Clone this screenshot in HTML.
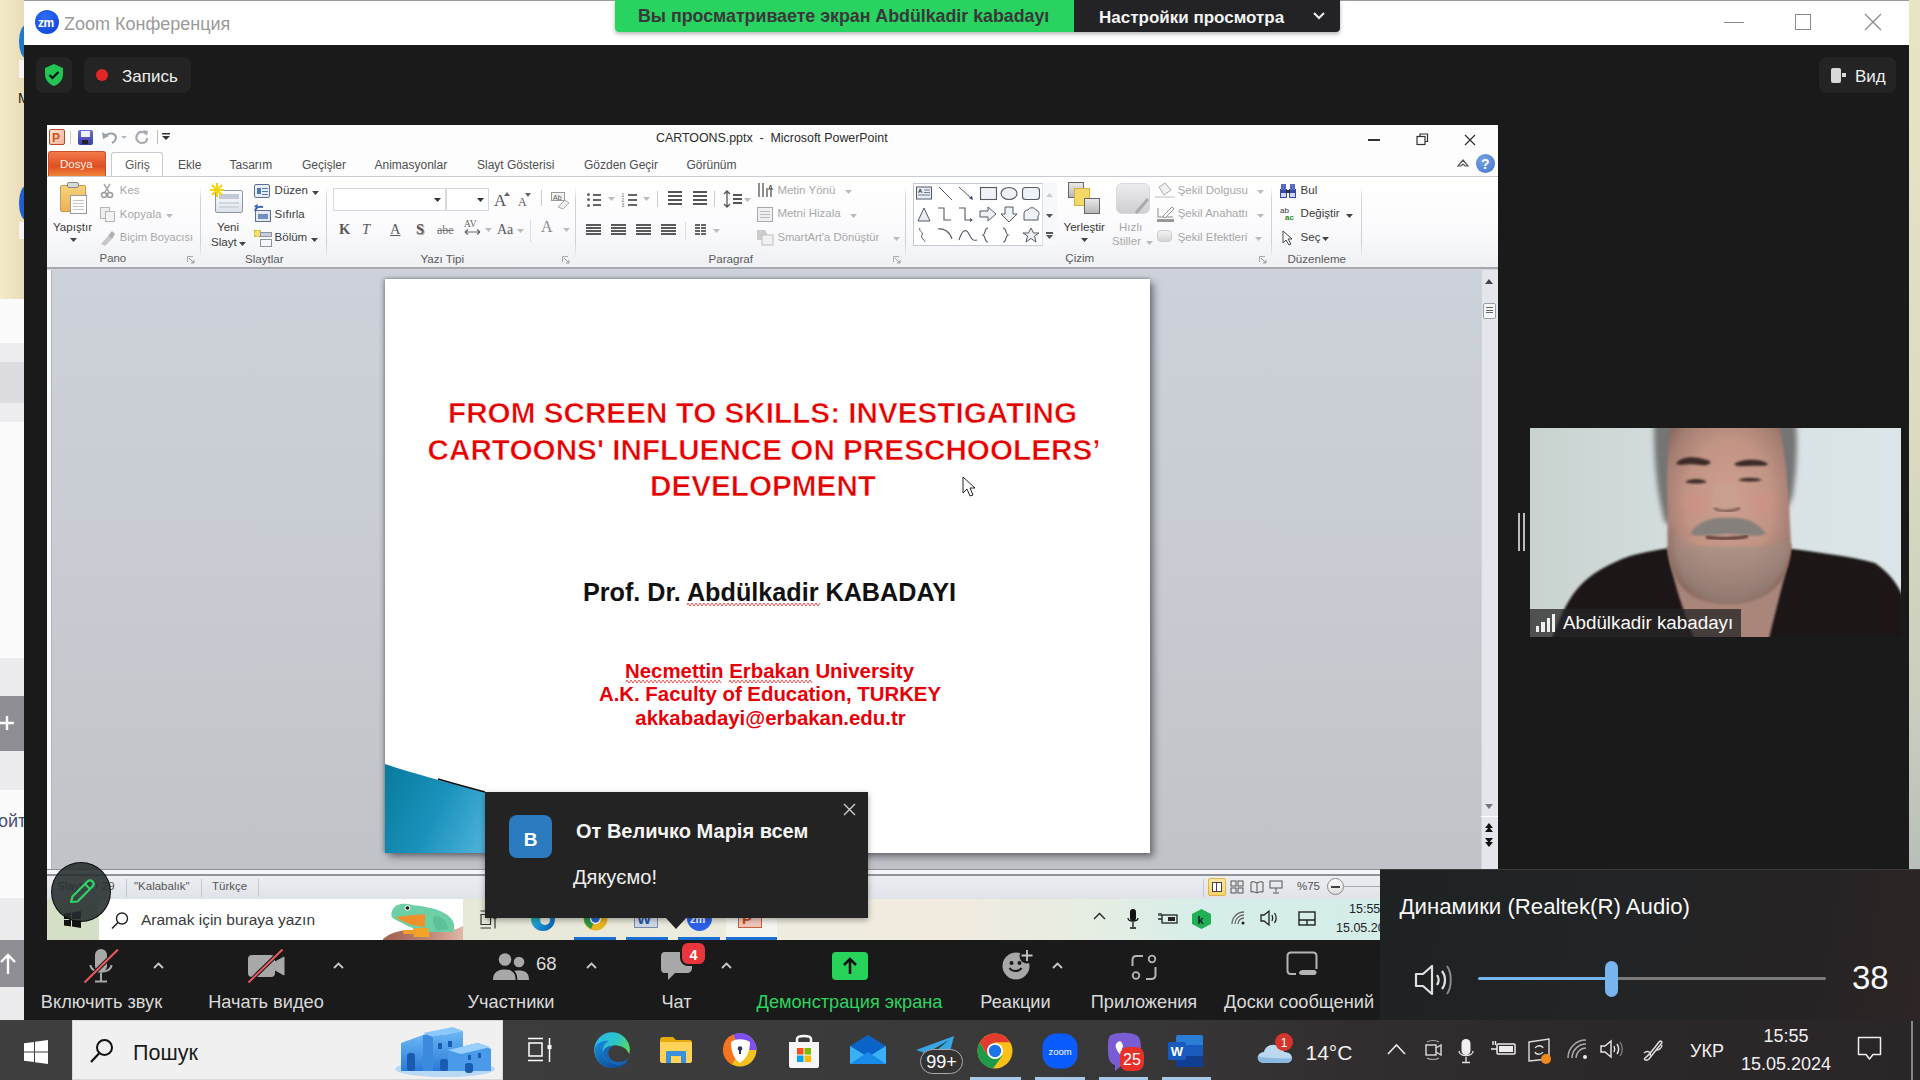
<!DOCTYPE html>
<html><head><meta charset="utf-8">
<style>
*{margin:0;padding:0;box-sizing:border-box}
html,body{width:1920px;height:1080px;overflow:hidden;background:#1a1a1a;font-family:"Liberation Sans",sans-serif}
.a{position:absolute}
.t{position:absolute;white-space:nowrap}
svg{overflow:visible}
</style></head><body>
<div class="a" style="left:0px;top:0px;width:24px;height:300px;background:linear-gradient(90deg,#f4e9c9,#eadcb8)"></div>
<div class="a" style="left:19px;top:25px;width:14px;height:33px;border-radius:50%;background:#1a7ad0"></div>
<div class="a" style="left:19px;top:60px;width:6px;height:18px;background:#f4f4f4"></div>
<div class="a" style="left:19px;top:186px;width:14px;height:34px;border-radius:50%;background:#1a5fd6"></div>
<div class="t" style="left:18px;top:90.60px;font-size:14px;line-height:1;color:#1a1a1a;font-weight:normal;font-family:'Liberation Sans';">M</div>
<div class="a" style="left:19px;top:222px;width:6px;height:17px;background:#f4f4f4"></div>
<div class="a" style="left:0px;top:299px;width:24px;height:721px;background:#fbfbfc"></div>
<div class="a" style="left:0px;top:343px;width:24px;height:19px;background:#ededf0"></div>
<div class="a" style="left:0px;top:362px;width:24px;height:41px;background:#dcdce0"></div>
<div class="a" style="left:0px;top:403px;width:24px;height:19px;background:#ededf0"></div>
<div class="a" style="left:0px;top:658px;width:24px;height:38px;background:#ebebee"></div>
<div class="a" style="left:0px;top:696px;width:24px;height:55px;background:#8e8e94"></div>
<svg class="a" style="left:0px;top:712px;" width="16" height="22" viewBox="0 0 16 22"><path d="M0 11H14M7 4V18" stroke="#fff" stroke-width="2.4"/></svg>
<div class="a" style="left:0px;top:751px;width:24px;height:39px;background:#ebebee"></div>
<div class="t" style="left:-2px;top:811.70px;font-size:18px;line-height:1;color:#4a4f70;font-weight:normal;font-family:'Liberation Sans';">ойт</div>
<div class="a" style="left:0px;top:898px;width:24px;height:42px;background:#ebebee"></div>
<div class="a" style="left:0px;top:940px;width:24px;height:47px;background:#8e8e94"></div>
<svg class="a" style="left:0px;top:952px;" width="18" height="24" viewBox="0 0 18 24"><path d="M8 22V3M1 10L8 3L15 10" stroke="#fff" stroke-width="2.4" fill="none"/></svg>
<div class="a" style="left:0px;top:987px;width:24px;height:33px;background:#ebebee"></div>
<div class="a" style="left:1909px;top:0px;width:11px;height:1020px;background:linear-gradient(180deg,#e9e4c8,#dcdcc0 40%,#c9cdbf 70%,#a9b0b4)"></div>
<div class="a" style="left:24px;top:0px;width:1885px;height:1020px;background:#1a1a1a"></div>
<div class="a" style="left:24px;top:0px;width:1885px;height:45px;background:#fff;border-top:1px solid #9a9a9a"></div>
<div class="a" style="left:35px;top:10px;width:24px;height:24px;border-radius:50%;background:radial-gradient(circle at 40% 30%,#2f6df5,#0b3fd6)"></div>
<div class="t" style="left:38px;top:16.80px;font-size:12px;line-height:1;color:#fff;font-weight:bold;font-family:'Liberation Sans';letter-spacing:-0.5px">zm</div>
<div class="t" style="left:64px;top:15.20px;font-size:18px;line-height:1;color:#9a9a9a;font-weight:normal;font-family:'Liberation Sans';">Zoom Конференция</div>
<div class="a" style="left:1724px;top:22px;width:20px;height:1px;background:#8a8a8a"></div>
<div class="a" style="left:1795px;top:14px;width:16px;height:16px;border:1px solid #8a8a8a"></div>
<svg class="a" style="left:1864px;top:13px;" width="18" height="18" viewBox="0 0 18 18"><path d="M1 1L17 17M17 1L1 17" stroke="#8a8a8a" stroke-width="1.2"/></svg>
<div class="a" style="left:615px;top:0px;width:725px;height:32px;border-radius:0 0 4px 4px;box-shadow:0 2px 4px rgba(0,0,0,.3);overflow:hidden;background:linear-gradient(90deg,#28d35f 0,#28d35f 459px,#232325 459px)"></div>
<div class="t" style="left:638px;top:7.87px;font-size:17.8px;line-height:1;color:#38383b;font-weight:bold;font-family:'Liberation Sans';">Вы просматриваете экран Abdülkadir kabadayı</div>
<div class="t" style="left:1099px;top:8.55px;font-size:17px;line-height:1;color:#f4f4f4;font-weight:bold;font-family:'Liberation Sans';">Настройки просмотра</div>
<svg class="a" style="left:1313px;top:12px;" width="12" height="8" viewBox="0 0 12 8"><path d="M1 1L6 6L11 1" stroke="#eee" stroke-width="2" fill="none"/></svg>
<div class="a" style="left:36px;top:57px;width:36px;height:36px;border-radius:8px;background:#242424"></div>
<svg class="a" style="left:44px;top:64px;" width="20" height="22" viewBox="0 0 20 22"><path d="M10 0L19 4V10C19 16 15 20 10 22C5 20 1 16 1 10V4Z" fill="#23c552"/><path d="M5.5 11L8.5 14L14.5 8" stroke="#111" stroke-width="2.2" fill="none"/></svg>
<div class="a" style="left:84px;top:57px;width:107px;height:36px;border-radius:8px;background:#242424"></div>
<div class="a" style="left:96px;top:69px;width:12px;height:12px;border-radius:50%;background:#e02828"></div>
<div class="t" style="left:122px;top:67.55px;font-size:17px;line-height:1;color:#f0f0f0;font-weight:normal;font-family:'Liberation Sans';">Запись</div>
<div class="a" style="left:1819px;top:57px;width:77px;height:36px;border-radius:8px;background:#242424"></div>
<div class="a" style="left:1831px;top:68px;width:10px;height:15px;border-radius:2px;background:#d8d8d8"></div>
<div class="a" style="left:1842px;top:73px;width:4px;height:4px;background:#d8d8d8"></div>
<div class="t" style="left:1855px;top:67.55px;font-size:17px;line-height:1;color:#f0f0f0;font-weight:normal;font-family:'Liberation Sans';">Вид</div>
<div class="a" style="left:47px;top:125px;width:1451px;height:815px;background:#c9cdd5"></div>
<div class="a" style="left:47px;top:125px;width:1451px;height:51px;background:#fdfdfe"></div>
<div class="a" style="left:49px;top:129px;width:16px;height:16px;border:1px solid #b5482a;border-radius:2px;background:linear-gradient(135deg,#fde6d8,#f5b096)"></div>
<div class="t" style="left:52px;top:131.80px;font-size:12px;line-height:1;color:#d2501c;font-weight:bold;font-family:'Liberation Sans';">P</div>
<div class="a" style="left:70px;top:131px;width:1px;height:13px;background:#c8c8c8"></div>
<div class="a" style="left:78px;top:130px;width:15px;height:15px;border-radius:2px;background:linear-gradient(180deg,#6d70d8,#3a3ea8)"></div>
<div class="a" style="left:81px;top:131px;width:9px;height:6px;background:#eef"></div>
<div class="a" style="left:82px;top:140px;width:6px;height:4px;background:#222"></div>
<svg class="a" style="left:100px;top:129px;" width="30" height="16" viewBox="0 0 30 16"><path d="M5 7C9 3 15 4 16 8C16 11 14 13 12 14" stroke="#9aa0aa" stroke-width="2" fill="none"/><path d="M2 3L3 10L9 7Z" fill="#9aa0aa"/><path d="M21 7L24 10L27 7Z" fill="#b5b8be"/></svg>
<svg class="a" style="left:134px;top:129px;" width="16" height="16" viewBox="0 0 16 16"><path d="M12 5C10 2 5 2 3 6C1 10 4 14 8 14C11 14 13 12 13 9" stroke="#a8acb4" stroke-width="2.2" fill="none"/><path d="M9 1L14 2L13 7Z" fill="#a8acb4"/></svg>
<div class="a" style="left:157px;top:130px;width:1px;height:14px;background:#c0c0c0"></div>
<svg class="a" style="left:161px;top:132px;" width="10" height="10" viewBox="0 0 10 10"><rect x="1" y="1" width="8" height="1.5" fill="#333"/><path d="M1 4H9L5 8Z" fill="#333"/></svg>
<div class="t" style="left:656px;top:132.46px;font-size:12.4px;line-height:1;color:#2b2b2b;font-weight:normal;font-family:'Liberation Sans';">CARTOONS.pptx&nbsp; - &nbsp;Microsoft PowerPoint</div>
<div class="a" style="left:1368px;top:139px;width:12px;height:1.5px;background:#333"></div>
<svg class="a" style="left:1416px;top:133px;" width="13" height="13" viewBox="0 0 13 13"><rect x="1" y="3.5" width="8" height="8" fill="none" stroke="#333" stroke-width="1.2"/><path d="M4 3.5V1H11.5V8.5H9" fill="none" stroke="#333" stroke-width="1.2"/></svg>
<svg class="a" style="left:1464px;top:134px;" width="12" height="12" viewBox="0 0 12 12"><path d="M1 1L11 11M11 1L1 11" stroke="#333" stroke-width="1.3"/></svg>
<div class="a" style="left:48px;top:151px;width:58px;height:25px;border-radius:3px 3px 0 0;background:linear-gradient(180deg,#f27a4a,#e04e24 60%,#f0853a);border:1px solid #c8522e;border-bottom:none"></div>
<div class="t" style="left:60px;top:159.22px;font-size:11.5px;line-height:1;color:#fff3e6;font-weight:normal;font-family:'Liberation Sans';">Dosya</div>
<div class="a" style="left:111px;top:152px;width:52px;height:25px;border-radius:3px 3px 0 0;background:#fff;border:1px solid #c6cad2;border-bottom:none"></div>
<div class="t" style="left:125px;top:158.80px;font-size:12px;line-height:1;color:#5a5a5a;font-weight:normal;font-family:'Liberation Sans';">Giriş</div>
<div class="t" style="left:178px;top:158.80px;font-size:12px;line-height:1;color:#4e4e4e;font-weight:normal;font-family:'Liberation Sans';">Ekle</div>
<div class="t" style="left:229.5px;top:158.80px;font-size:12px;line-height:1;color:#4e4e4e;font-weight:normal;font-family:'Liberation Sans';">Tasarım</div>
<div class="t" style="left:302px;top:158.80px;font-size:12px;line-height:1;color:#4e4e4e;font-weight:normal;font-family:'Liberation Sans';">Geçişler</div>
<div class="t" style="left:374.5px;top:158.80px;font-size:12px;line-height:1;color:#4e4e4e;font-weight:normal;font-family:'Liberation Sans';">Animasyonlar</div>
<div class="t" style="left:477px;top:158.80px;font-size:12px;line-height:1;color:#4e4e4e;font-weight:normal;font-family:'Liberation Sans';">Slayt Gösterisi</div>
<div class="t" style="left:584px;top:158.80px;font-size:12px;line-height:1;color:#4e4e4e;font-weight:normal;font-family:'Liberation Sans';">Gözden Geçir</div>
<div class="t" style="left:686.5px;top:158.80px;font-size:12px;line-height:1;color:#4e4e4e;font-weight:normal;font-family:'Liberation Sans';">Görünüm</div>
<svg class="a" style="left:1457px;top:158px;" width="12" height="10" viewBox="0 0 12 10"><path d="M1 8L6 2L11 8L8 8L6 6L4 8Z" fill="none" stroke="#555" stroke-width="1.2"/></svg>
<div class="a" style="left:1476px;top:154px;width:19px;height:19px;border-radius:50%;background:radial-gradient(circle at 40% 35%,#7aa5e8,#3f6fcc)"></div>
<div class="t" style="left:1481px;top:157.10px;font-size:14px;line-height:1;color:#fff;font-weight:bold;font-family:'Liberation Sans';">?</div>
<div class="a" style="left:47px;top:176px;width:1451px;height:92px;background:linear-gradient(180deg,#ffffff 0,#fbfbfd 55%,#eef0f3 100%);border-top:1px solid #c6cad2"></div>
<div class="a" style="left:47px;top:267px;width:1451px;height:2px;background:#a5a8ae"></div>
<div class="a" style="left:47px;top:269px;width:1451px;height:1px;background:#d3d6dc"></div>
<div class="a" style="left:200px;top:186px;width:1px;height:72px;background:linear-gradient(180deg,rgba(200,204,212,0),#cfd2d8 20%,#cfd2d8 80%,rgba(200,204,212,0))"></div>
<div class="a" style="left:326px;top:186px;width:1px;height:72px;background:linear-gradient(180deg,rgba(200,204,212,0),#cfd2d8 20%,#cfd2d8 80%,rgba(200,204,212,0))"></div>
<div class="a" style="left:575px;top:186px;width:1px;height:72px;background:linear-gradient(180deg,rgba(200,204,212,0),#cfd2d8 20%,#cfd2d8 80%,rgba(200,204,212,0))"></div>
<div class="a" style="left:905px;top:186px;width:1px;height:72px;background:linear-gradient(180deg,rgba(200,204,212,0),#cfd2d8 20%,#cfd2d8 80%,rgba(200,204,212,0))"></div>
<div class="a" style="left:1271px;top:186px;width:1px;height:72px;background:linear-gradient(180deg,rgba(200,204,212,0),#cfd2d8 20%,#cfd2d8 80%,rgba(200,204,212,0))"></div>
<div class="a" style="left:1361px;top:186px;width:1px;height:72px;background:linear-gradient(180deg,rgba(200,204,212,0),#cfd2d8 20%,#cfd2d8 80%,rgba(200,204,212,0))"></div>
<div class="a" style="left:60px;top:185px;width:26px;height:27px;background:linear-gradient(180deg,#f8d27e,#e9b255);border:1px solid #c99a4a;border-radius:2px"></div>
<div class="a" style="left:67px;top:182px;width:12px;height:6px;background:#d9d9d9;border:1px solid #888;border-radius:2px"></div>
<div class="a" style="left:70px;top:195px;width:17px;height:19px;background:#fff;border:1px solid #9a9a9a"></div>
<div class="a" style="left:73px;top:200px;width:11px;height:1px;background:#c8c8c8"></div>
<div class="a" style="left:73px;top:203px;width:11px;height:1px;background:#c8c8c8"></div>
<div class="a" style="left:73px;top:206px;width:11px;height:1px;background:#c8c8c8"></div>
<div class="a" style="left:73px;top:209px;width:11px;height:1px;background:#c8c8c8"></div>
<div class="t" style="left:53px;top:221.14px;font-size:11.6px;line-height:1;color:#3a3a3a;font-weight:normal;font-family:'Liberation Sans';">Yapıştır</div>
<svg class="a" style="left:70px;top:238px;" width="7" height="4" viewBox="0 0 7 4"><path d="M0 0H7L3.5 4Z" fill="#444"/></svg>
<svg class="a" style="left:101px;top:183px;" width="12" height="15" viewBox="0 0 12 15"><circle cx="3" cy="12" r="2.5" fill="none" stroke="#9a9a9a" stroke-width="1.5"/><circle cx="9" cy="12" r="2.5" fill="none" stroke="#9a9a9a" stroke-width="1.5"/><path d="M4 9L9 1M8 9L3 1" stroke="#aaa" stroke-width="1.5"/></svg>
<div class="t" style="left:119.8px;top:185.22px;font-size:11.5px;line-height:1;color:#a8a8a8;font-weight:normal;font-family:'Liberation Sans';">Kes</div>
<div class="a" style="left:100px;top:207px;width:10px;height:12px;background:#eee;border:1px solid #b5b5b5"></div>
<div class="a" style="left:105px;top:211px;width:10px;height:11px;background:#f2f2f2;border:1px solid #b5b5b5"></div>
<div class="t" style="left:119.8px;top:208.53px;font-size:11.5px;line-height:1;color:#a8a8a8;font-weight:normal;font-family:'Liberation Sans';">Kopyala</div>
<svg class="a" style="left:166px;top:214px;" width="7" height="4" viewBox="0 0 7 4"><path d="M0 0H7L3.5 4Z" fill="#bbb"/></svg>
<svg class="a" style="left:99px;top:230px;" width="17" height="16" viewBox="0 0 17 16"><path d="M2 14L9 6L13 9L6 16Z" fill="#c8c8c8"/><path d="M9 6L13 1L16 4L13 9Z" fill="#b0b0b0"/></svg>
<div class="t" style="left:119.8px;top:232.18px;font-size:11.2px;line-height:1;color:#a8a8a8;font-weight:normal;font-family:'Liberation Sans';">Biçim Boyacısı</div>
<div class="t" style="left:99.6px;top:253.31px;font-size:11.4px;line-height:1;color:#5a5a5a;font-weight:normal;font-family:'Liberation Sans';">Pano</div>
<svg class="a" style="left:187px;top:256px;" width="8" height="8" viewBox="0 0 8 8"><path d="M0.5 6V0.5H6" stroke="#aaa" fill="none"/><path d="M2 2L7 7M7 4V7H4" stroke="#999" fill="none"/></svg>
<div class="a" style="left:215px;top:190px;width:28px;height:23px;background:linear-gradient(180deg,#fafbfd,#dfe3ea);border:1px solid #8d96a6;border-radius:2px"></div>
<div class="a" style="left:219px;top:194px;width:20px;height:5px;background:#c3cad6"></div>
<div class="a" style="left:219px;top:202px;width:20px;height:2px;background:#d0d5de"></div>
<div class="a" style="left:219px;top:206px;width:20px;height:2px;background:#d0d5de"></div>
<svg class="a" style="left:210px;top:183px;" width="14" height="14" viewBox="0 0 14 14"><path d="M7 0V14M0 7H14M2 2L12 12M12 2L2 12" stroke="#f5d40a" stroke-width="2"/></svg>
<div class="t" style="left:217px;top:221.14px;font-size:11.6px;line-height:1;color:#3a3a3a;font-weight:normal;font-family:'Liberation Sans';">Yeni</div>
<div class="t" style="left:211px;top:236.14px;font-size:11.6px;line-height:1;color:#3a3a3a;font-weight:normal;font-family:'Liberation Sans';">Slayt</div>
<svg class="a" style="left:239px;top:242px;" width="7" height="4" viewBox="0 0 7 4"><path d="M0 0H7L3.5 4Z" fill="#444"/></svg>
<div class="a" style="left:254px;top:184px;width:16px;height:14px;background:#e9eef6;border:1px solid #5d6f8f;border-radius:2px"></div>
<div class="a" style="left:257px;top:188px;width:4px;height:6px;background:#4f78b8"></div>
<div class="a" style="left:262px;top:188px;width:6px;height:1px;background:#4f78b8"></div>
<div class="a" style="left:262px;top:191px;width:6px;height:1px;background:#4f78b8"></div>
<div class="a" style="left:262px;top:194px;width:6px;height:1px;background:#4f78b8"></div>
<div class="t" style="left:274.6px;top:185.22px;font-size:11.5px;line-height:1;color:#3a3a3a;font-weight:normal;font-family:'Liberation Sans';">Düzen</div>
<svg class="a" style="left:312px;top:191px;" width="7" height="4" viewBox="0 0 7 4"><path d="M0 0H7L3.5 4Z" fill="#444"/></svg>
<div class="a" style="left:255px;top:210px;width:16px;height:12px;background:#e3e9f3;border:1px solid #5d6f8f"></div>
<div class="a" style="left:258px;top:214px;width:10px;height:5px;background:#6f8fc4"></div>
<svg class="a" style="left:254px;top:204px;" width="10" height="8" viewBox="0 0 10 8"><path d="M1 7C2 3 5 2 9 3" stroke="#3c66b4" stroke-width="2" fill="none"/><path d="M0 2L4 0L3 5Z" fill="#3c66b4"/></svg>
<div class="t" style="left:274.6px;top:208.53px;font-size:11.5px;line-height:1;color:#3a3a3a;font-weight:normal;font-family:'Liberation Sans';">Sıfırla</div>
<div class="a" style="left:254px;top:230px;width:7px;height:7px;background:#f0e070;border:1px dashed #c8b030"></div>
<div class="a" style="left:260px;top:232px;width:12px;height:5px;background:#c8cfda;border:1px solid #8a94a4"></div>
<div class="a" style="left:260px;top:239px;width:12px;height:8px;background:#f4f6f9;border:1px solid #8a94a4"></div>
<div class="t" style="left:274.6px;top:231.92px;font-size:11.5px;line-height:1;color:#3a3a3a;font-weight:normal;font-family:'Liberation Sans';">Bölüm</div>
<svg class="a" style="left:311px;top:238px;" width="7" height="4" viewBox="0 0 7 4"><path d="M0 0H7L3.5 4Z" fill="#444"/></svg>
<div class="t" style="left:245px;top:253.14px;font-size:11.6px;line-height:1;color:#5a5a5a;font-weight:normal;font-family:'Liberation Sans';">Slaytlar</div>
<div class="a" style="left:333px;top:188px;width:113px;height:23px;background:#fff;border:1px solid #d5d8de"></div>
<div class="a" style="left:446px;top:188px;width:43px;height:23px;background:#fff;border:1px solid #d5d8de"></div>
<svg class="a" style="left:434px;top:198px;" width="7" height="4" viewBox="0 0 7 4"><path d="M0 0H7L3.5 4Z" fill="#333"/></svg>
<svg class="a" style="left:477px;top:198px;" width="7" height="4" viewBox="0 0 7 4"><path d="M0 0H7L3.5 4Z" fill="#333"/></svg>
<div class="t" style="left:494px;top:191.55px;font-size:17px;line-height:1;color:#555;font-weight:normal;font-family:'Liberation Serif';">A</div>
<svg class="a" style="left:504px;top:192px;" width="6" height="4" viewBox="0 0 6 4"><path d="M0 4L3 0L6 4Z" fill="#666"/></svg>
<div class="t" style="left:518px;top:195.80px;font-size:12px;line-height:1;color:#555;font-weight:normal;font-family:'Liberation Serif';">A</div>
<svg class="a" style="left:525px;top:193px;" width="6" height="4" viewBox="0 0 6 4"><path d="M0 0H6L3 4Z" fill="#666"/></svg>
<div class="a" style="left:541px;top:190px;width:1px;height:16px;background:#ccc"></div>
<div class="a" style="left:551px;top:192px;width:14px;height:9px;background:#f4f4f4;border:1px solid #999"></div>
<div class="t" style="left:553px;top:193.55px;font-size:7px;line-height:1;color:#555;font-weight:normal;font-family:'Liberation Sans';">Ab</div>
<svg class="a" style="left:556px;top:199px;" width="14" height="10" viewBox="0 0 14 10"><path d="M2 8L9 1L13 4L7 10Z" fill="#eee" stroke="#aaa"/></svg>
<div class="t" style="left:339px;top:221.68px;font-size:14.5px;line-height:1;color:#5a5a5a;font-weight:bold;font-family:'Liberation Serif';">K</div>
<div class="t" style="left:362px;top:221.68px;font-size:14.5px;line-height:1;color:#5a5a5a;font-weight:normal;font-family:'Liberation Serif';font-style:italic">T</div>
<div class="t" style="left:390px;top:221.68px;font-size:14.5px;line-height:1;color:#5a5a5a;font-weight:normal;font-family:'Liberation Serif';text-decoration:underline">A</div>
<div class="t" style="left:416px;top:221.68px;font-size:14.5px;line-height:1;color:#5a5a5a;font-weight:bold;font-family:'Liberation Serif';text-shadow:1px 1px 1px #999">S</div>
<div class="t" style="left:437px;top:223.80px;font-size:12px;line-height:1;color:#777;font-weight:normal;font-family:'Liberation Serif';text-decoration:line-through">abe</div>
<div class="t" style="left:464px;top:219.93px;font-size:9.5px;line-height:1;color:#666;font-weight:normal;font-family:'Liberation Serif';">AV</div>
<svg class="a" style="left:464px;top:229px;" width="17" height="6" viewBox="0 0 17 6"><path d="M1 3H16M1 3L4 0.5M1 3L4 5.5M16 3L13 0.5M16 3L13 5.5" stroke="#666" stroke-width="1.2" fill="none"/></svg>
<svg class="a" style="left:485px;top:228px;" width="7" height="4" viewBox="0 0 7 4"><path d="M0 0H7L3.5 4Z" fill="#bbb"/></svg>
<div class="t" style="left:497px;top:223.10px;font-size:14px;line-height:1;color:#5a5a5a;font-weight:normal;font-family:'Liberation Serif';">Aa</div>
<svg class="a" style="left:517px;top:229px;" width="7" height="4" viewBox="0 0 7 4"><path d="M0 0H7L3.5 4Z" fill="#bbb"/></svg>
<div class="a" style="left:530px;top:220px;width:1px;height:22px;background:#ddd"></div>
<div class="t" style="left:541px;top:219.40px;font-size:16px;line-height:1;color:#8a8a8a;font-weight:normal;font-family:'Liberation Serif';">A</div>
<svg class="a" style="left:563px;top:228px;" width="7" height="4" viewBox="0 0 7 4"><path d="M0 0H7L3.5 4Z" fill="#bbb"/></svg>
<div class="t" style="left:420.5px;top:253.14px;font-size:11.6px;line-height:1;color:#5a5a5a;font-weight:normal;font-family:'Liberation Sans';">Yazı Tipi</div>
<svg class="a" style="left:562px;top:256px;" width="8" height="8" viewBox="0 0 8 8"><path d="M0.5 6V0.5H6" stroke="#aaa" fill="none"/><path d="M2 2L7 7M7 4V7H4" stroke="#999" fill="none"/></svg>
<div class="a" style="left:587px;top:193.0px;width:3px;height:3px;border-radius:50%;background:#666"></div>
<div class="a" style="left:593px;top:193.5px;width:8px;height:2px;background:#666"></div>
<div class="t" style="left:621.5px;top:192.75px;font-size:5px;line-height:1;color:#666;font-weight:normal;font-family:'Liberation Sans';">1</div>
<div class="a" style="left:628px;top:193.5px;width:9px;height:2px;background:#666"></div>
<div class="a" style="left:587px;top:198.3px;width:3px;height:3px;border-radius:50%;background:#666"></div>
<div class="a" style="left:593px;top:198.8px;width:8px;height:2px;background:#666"></div>
<div class="t" style="left:621.5px;top:198.05px;font-size:5px;line-height:1;color:#666;font-weight:normal;font-family:'Liberation Sans';">2</div>
<div class="a" style="left:628px;top:198.8px;width:9px;height:2px;background:#666"></div>
<div class="a" style="left:587px;top:203.6px;width:3px;height:3px;border-radius:50%;background:#666"></div>
<div class="a" style="left:593px;top:204.1px;width:8px;height:2px;background:#666"></div>
<div class="t" style="left:621.5px;top:203.35px;font-size:5px;line-height:1;color:#666;font-weight:normal;font-family:'Liberation Sans';">3</div>
<div class="a" style="left:628px;top:204.1px;width:9px;height:2px;background:#666"></div>
<svg class="a" style="left:608px;top:197px;" width="7" height="4" viewBox="0 0 7 4"><path d="M0 0H7L3.5 4Z" fill="#bbb"/></svg>
<svg class="a" style="left:643px;top:197px;" width="7" height="4" viewBox="0 0 7 4"><path d="M0 0H7L3.5 4Z" fill="#bbb"/></svg>
<div class="a" style="left:657px;top:191px;width:1px;height:16px;background:#ccc"></div>
<div class="a" style="left:668px;top:191px;width:14px;height:2px;background:#555"></div>
<div class="a" style="left:668px;top:195px;width:14px;height:2px;background:#555"></div>
<div class="a" style="left:668px;top:199px;width:14px;height:2px;background:#555"></div>
<div class="a" style="left:668px;top:203px;width:14px;height:2px;background:#555"></div>
<div class="a" style="left:693px;top:191px;width:14px;height:2px;background:#555"></div>
<div class="a" style="left:693px;top:195px;width:14px;height:2px;background:#555"></div>
<div class="a" style="left:693px;top:199px;width:14px;height:2px;background:#555"></div>
<div class="a" style="left:693px;top:203px;width:14px;height:2px;background:#555"></div>
<div class="a" style="left:714px;top:191px;width:1px;height:16px;background:#ccc"></div>
<svg class="a" style="left:723px;top:190px;" width="8" height="18" viewBox="0 0 8 18"><path d="M4 1V17M1 4L4 1L7 4M1 14L4 17L7 14" stroke="#555" stroke-width="1.3" fill="none"/></svg>
<div class="a" style="left:733px;top:194px;width:9px;height:2px;background:#555"></div>
<div class="a" style="left:733px;top:198px;width:9px;height:2px;background:#555"></div>
<div class="a" style="left:733px;top:202px;width:9px;height:2px;background:#555"></div>
<svg class="a" style="left:744px;top:198px;" width="7" height="4" viewBox="0 0 7 4"><path d="M0 0H7L3.5 4Z" fill="#bbb"/></svg>
<div class="a" style="left:586px;top:224px;width:15px;height:2px;background:#5a5a5a"></div>
<div class="a" style="left:586px;top:227px;width:15px;height:2px;background:#5a5a5a"></div>
<div class="a" style="left:586px;top:230px;width:15px;height:2px;background:#5a5a5a"></div>
<div class="a" style="left:586px;top:233px;width:15px;height:2px;background:#5a5a5a"></div>
<div class="a" style="left:611px;top:224px;width:15px;height:2px;background:#5a5a5a"></div>
<div class="a" style="left:611px;top:227px;width:15px;height:2px;background:#5a5a5a"></div>
<div class="a" style="left:611px;top:230px;width:15px;height:2px;background:#5a5a5a"></div>
<div class="a" style="left:611px;top:233px;width:15px;height:2px;background:#5a5a5a"></div>
<div class="a" style="left:636px;top:224px;width:15px;height:2px;background:#5a5a5a"></div>
<div class="a" style="left:636px;top:227px;width:15px;height:2px;background:#5a5a5a"></div>
<div class="a" style="left:636px;top:230px;width:15px;height:2px;background:#5a5a5a"></div>
<div class="a" style="left:636px;top:233px;width:15px;height:2px;background:#5a5a5a"></div>
<div class="a" style="left:661px;top:224px;width:15px;height:2px;background:#5a5a5a"></div>
<div class="a" style="left:661px;top:227px;width:15px;height:2px;background:#5a5a5a"></div>
<div class="a" style="left:661px;top:230px;width:15px;height:2px;background:#5a5a5a"></div>
<div class="a" style="left:661px;top:233px;width:15px;height:2px;background:#5a5a5a"></div>
<div class="a" style="left:685px;top:222px;width:1px;height:18px;background:#ddd"></div>
<div class="a" style="left:695px;top:224px;width:5px;height:2px;background:#666"></div>
<div class="a" style="left:695px;top:227px;width:5px;height:2px;background:#666"></div>
<div class="a" style="left:695px;top:230px;width:5px;height:2px;background:#666"></div>
<div class="a" style="left:695px;top:233px;width:5px;height:2px;background:#666"></div>
<div class="a" style="left:701px;top:224px;width:5px;height:2px;background:#666"></div>
<div class="a" style="left:701px;top:227px;width:5px;height:2px;background:#666"></div>
<div class="a" style="left:701px;top:230px;width:5px;height:2px;background:#666"></div>
<div class="a" style="left:701px;top:233px;width:5px;height:2px;background:#666"></div>
<svg class="a" style="left:713px;top:229px;" width="7" height="4" viewBox="0 0 7 4"><path d="M0 0H7L3.5 4Z" fill="#bbb"/></svg>
<svg class="a" style="left:757px;top:182px;" width="16" height="16" viewBox="0 0 16 16"><path d="M2 1V15M6 1V15M10 6V15M14 6V15" stroke="#555" stroke-width="1.3"/></svg>
<div class="t" style="left:768px;top:184.05px;font-size:7px;line-height:1;color:#555;font-weight:bold;font-family:'Liberation Sans';">A</div>
<div class="t" style="left:777.4px;top:184.53px;font-size:11.5px;line-height:1;color:#a8a8a8;font-weight:normal;font-family:'Liberation Sans';">Metin Yönü</div>
<svg class="a" style="left:845px;top:190px;" width="7" height="4" viewBox="0 0 7 4"><path d="M0 0H7L3.5 4Z" fill="#bbb"/></svg>
<div class="a" style="left:757px;top:207px;width:16px;height:15px;background:#eef0f3;border:1px solid #aaa"></div>
<div class="a" style="left:760px;top:211px;width:10px;height:1px;background:#bbb"></div>
<div class="a" style="left:760px;top:214px;width:10px;height:1px;background:#bbb"></div>
<div class="a" style="left:760px;top:217px;width:10px;height:1px;background:#bbb"></div>
<div class="t" style="left:777.4px;top:208.22px;font-size:11.5px;line-height:1;color:#a8a8a8;font-weight:normal;font-family:'Liberation Sans';">Metni Hizala</div>
<svg class="a" style="left:850px;top:214px;" width="7" height="4" viewBox="0 0 7 4"><path d="M0 0H7L3.5 4Z" fill="#bbb"/></svg>
<svg class="a" style="left:756px;top:229px;" width="18" height="17" viewBox="0 0 18 17"><path d="M1 1H9L12 7L9 11H1Z" fill="#ccc"/><rect x="6" y="6" width="11" height="10" fill="#f2f2f2" stroke="#bbb"/></svg>
<div class="t" style="left:777.4px;top:232.00px;font-size:11.3px;line-height:1;color:#a8a8a8;font-weight:normal;font-family:'Liberation Sans';">SmartArt&#39;a Dönüştür</div>
<svg class="a" style="left:893px;top:237px;" width="7" height="4" viewBox="0 0 7 4"><path d="M0 0H7L3.5 4Z" fill="#bbb"/></svg>
<div class="t" style="left:708.5px;top:253.14px;font-size:11.6px;line-height:1;color:#5a5a5a;font-weight:normal;font-family:'Liberation Sans';">Paragraf</div>
<svg class="a" style="left:893px;top:256px;" width="8" height="8" viewBox="0 0 8 8"><path d="M0.5 6V0.5H6" stroke="#aaa" fill="none"/><path d="M2 2L7 7M7 4V7H4" stroke="#999" fill="none"/></svg>
<div class="a" style="left:913px;top:183px;width:144px;height:63px;background:#fff;border:1px solid #c5c9d0"></div>
<div class="a" style="left:1042px;top:183px;width:15px;height:63px;background:#f7f8fa;border-left:1px solid #dde0e5"></div>
<svg class="a" style="left:1046px;top:193px;" width="7" height="4" viewBox="0 0 7 4"><path d="M0 4L3.5 0L7 4Z" fill="#ccc"/></svg>
<svg class="a" style="left:1046px;top:214px;" width="7" height="4" viewBox="0 0 7 4"><path d="M0 0H7L3.5 4Z" fill="#555"/></svg>
<div class="a" style="left:1046px;top:232px;width:7px;height:1.5px;background:#555"></div>
<svg class="a" style="left:1046px;top:235px;" width="7" height="4" viewBox="0 0 7 4"><path d="M0 0H7L3.5 4Z" fill="#555"/></svg>
<svg class="a" style="left:916px;top:186px;" width="128" height="58" viewBox="0 0 128 58">
<rect x="0.5" y="1" width="15" height="12" fill="#e8eef8" stroke="#555a66"/><text x="2" y="7" font-size="6" font-weight="bold" fill="#222" font-family="Liberation Sans">A</text><path d="M8 4H14M8 6.5H14M2 9H14" stroke="#555a66" stroke-width="0.8"/>
<path d="M23 1L36 14" stroke="#555a66"/><path d="M43 1L56 13" stroke="#555a66"/><path d="M53 12L57 14L56 10Z" fill="#2a3a7a"/>
<rect x="64.5" y="1.5" width="16" height="12" fill="#eef1f6" stroke="#555a66" stroke-width="1.1"/>
<ellipse cx="93" cy="7.5" rx="8" ry="6" fill="#eef1f6" stroke="#555a66" stroke-width="1.1"/>
<rect x="106.5" y="1.5" width="17" height="12" rx="3" fill="#eef1f6" stroke="#555a66" stroke-width="1.1"/>
<path d="M8 22L14 35H2Z" fill="#e8ecf3" stroke="#555a66"/>
<path d="M22 22H28V34H35" stroke="#555a66" fill="none" stroke-width="1.1"/>
<path d="M43 22H49V34H56" stroke="#555a66" fill="none" stroke-width="1.1"/><path d="M54 32L57 34L54 36Z" fill="#555a66"/>
<path d="M64 25H72V21L80 28L72 35V31H64Z" fill="#eef1f6" stroke="#555a66"/>
<path d="M89 21H97V28H101L93 36L85 28H89Z" fill="#eef1f6" stroke="#555a66"/>
<path d="M108 34V28C108 25 110 24 112 24C113 21 119 21 120 24C123 25 124 28 122 30V34Z" fill="#eef1f6" stroke="#555a66"/>
<path d="M4 42C2 45 8 46 6 49C4 52 9 54 9 56" stroke="#555a66" fill="none"/>
<path d="M22 43C28 42 34 46 36 53" stroke="#555a66" fill="none" stroke-width="1.1"/>
<path d="M43 54C46 44 50 42 53 48C56 54 57 55 61 54" stroke="#555a66" fill="none" stroke-width="1.1"/>
<path d="M72 42C68 42 70 48 67 49C70 50 68 56 72 56" stroke="#555a66" fill="none" stroke-width="1.1"/>
<path d="M87 42C91 42 89 48 92 49C89 50 91 56 87 56" stroke="#555a66" fill="none" stroke-width="1.1"/>
<path d="M115 42L117.5 47H123L118.5 50L120 56L115 52.5L110 56L111.5 50L107 47H112.5Z" fill="#eef1f6" stroke="#555a66"/>
</svg>
<div class="a" style="left:1068px;top:182px;width:16px;height:16px;background:linear-gradient(180deg,#e8e8e8,#b8b8b8);border:1px solid #666"></div>
<div class="a" style="left:1074px;top:188px;width:16px;height:18px;background:#f5d86a;border:1px solid #d4b040"></div>
<div class="a" style="left:1084px;top:198px;width:16px;height:16px;background:linear-gradient(180deg,#e8e8e8,#b8b8b8);border:1px solid #666"></div>
<div class="t" style="left:1063.5px;top:220.64px;font-size:11.6px;line-height:1;color:#3a3a3a;font-weight:normal;font-family:'Liberation Sans';">Yerleştir</div>
<svg class="a" style="left:1081px;top:238px;" width="7" height="4" viewBox="0 0 7 4"><path d="M0 0H7L3.5 4Z" fill="#444"/></svg>
<div class="a" style="left:1116px;top:183px;width:34px;height:31px;border-radius:6px;background:linear-gradient(180deg,#ececee,#cfcfd3);border:1px solid #d8d8dc"></div>
<svg class="a" style="left:1134px;top:196px;" width="16" height="18" viewBox="0 0 16 18"><path d="M2 17L14 3" stroke="#aaa" stroke-width="3"/></svg>
<div class="t" style="left:1119px;top:220.64px;font-size:11.6px;line-height:1;color:#a8a8a8;font-weight:normal;font-family:'Liberation Sans';">Hızlı</div>
<div class="t" style="left:1112px;top:235.14px;font-size:11.6px;line-height:1;color:#a8a8a8;font-weight:normal;font-family:'Liberation Sans';">Stiller</div>
<svg class="a" style="left:1146px;top:241px;" width="7" height="4" viewBox="0 0 7 4"><path d="M0 0H7L3.5 4Z" fill="#bbb"/></svg>
<div class="t" style="left:1065.3px;top:252.44px;font-size:11.6px;line-height:1;color:#5a5a5a;font-weight:normal;font-family:'Liberation Sans';">Çizim</div>
<svg class="a" style="left:1259px;top:256px;" width="8" height="8" viewBox="0 0 8 8"><path d="M0.5 6V0.5H6" stroke="#aaa" fill="none"/><path d="M2 2L7 7M7 4V7H4" stroke="#999" fill="none"/></svg>
<svg class="a" style="left:1155px;top:182px;" width="20" height="17" viewBox="0 0 20 17"><path d="M4 5L10 1L16 8L9 13Z" fill="#f0f0f0" stroke="#aaa"/><path d="M0 15H20" stroke="#ddd" stroke-width="2"/></svg>
<div class="t" style="left:1177.7px;top:184.82px;font-size:11.5px;line-height:1;color:#a8a8a8;font-weight:normal;font-family:'Liberation Sans';">Şekil Dolgusu</div>
<svg class="a" style="left:1257px;top:190px;" width="7" height="4" viewBox="0 0 7 4"><path d="M0 0H7L3.5 4Z" fill="#bbb"/></svg>
<svg class="a" style="left:1157px;top:206px;" width="18" height="17" viewBox="0 0 18 17"><path d="M1 2V11H16" stroke="#888" fill="none"/><path d="M6 10L15 1L17 3L8 12Z" fill="#fff" stroke="#999"/><rect x="0" y="13" width="17" height="3" fill="#999"/></svg>
<div class="t" style="left:1177.7px;top:208.42px;font-size:11.5px;line-height:1;color:#a8a8a8;font-weight:normal;font-family:'Liberation Sans';">Şekil Anahattı</div>
<svg class="a" style="left:1257px;top:214px;" width="7" height="4" viewBox="0 0 7 4"><path d="M0 0H7L3.5 4Z" fill="#bbb"/></svg>
<div class="a" style="left:1157px;top:230px;width:15px;height:12px;border-radius:4px;background:linear-gradient(180deg,#f5f5f5,#d5d5d5);border:1px solid #ccc"></div>
<div class="t" style="left:1177.7px;top:231.82px;font-size:11.5px;line-height:1;color:#a8a8a8;font-weight:normal;font-family:'Liberation Sans';">Şekil Efektleri</div>
<svg class="a" style="left:1255px;top:237px;" width="7" height="4" viewBox="0 0 7 4"><path d="M0 0H7L3.5 4Z" fill="#bbb"/></svg>
<svg class="a" style="left:1280px;top:184px;" width="17" height="14" viewBox="0 0 17 14"><rect x="0" y="5" width="7" height="9" fill="#3a4aa8"/><rect x="9" y="5" width="7" height="9" fill="#3a4aa8"/><rect x="1" y="0" width="5" height="6" fill="#5a6ac8"/><rect x="10" y="0" width="5" height="6" fill="#5a6ac8"/><rect x="6" y="6" width="4" height="3" fill="#333"/><rect x="1" y="9" width="5" height="4" fill="#cfd6f0"/><rect x="10" y="9" width="5" height="4" fill="#cfd6f0"/></svg>
<div class="t" style="left:1300.6px;top:184.82px;font-size:11.5px;line-height:1;color:#3a3a3a;font-weight:normal;font-family:'Liberation Sans';">Bul</div>
<div class="t" style="left:1280px;top:207.20px;font-size:8px;line-height:1;color:#333;font-weight:normal;font-family:'Liberation Sans';">ab</div>
<div class="t" style="left:1285px;top:214.20px;font-size:8px;line-height:1;color:#2a8a2a;font-weight:bold;font-family:'Liberation Sans';">ac</div>
<div class="t" style="left:1300.6px;top:208.42px;font-size:11.5px;line-height:1;color:#3a3a3a;font-weight:normal;font-family:'Liberation Sans';">Değiştir</div>
<svg class="a" style="left:1346px;top:214px;" width="7" height="4" viewBox="0 0 7 4"><path d="M0 0H7L3.5 4Z" fill="#444"/></svg>
<svg class="a" style="left:1282px;top:230px;" width="11" height="16" viewBox="0 0 11 16"><path d="M1 1V13L4 10L7 15L9 14L6 9H10Z" fill="#fff" stroke="#444"/></svg>
<div class="t" style="left:1300.6px;top:231.92px;font-size:11.5px;line-height:1;color:#3a3a3a;font-weight:normal;font-family:'Liberation Sans';">Seç</div>
<svg class="a" style="left:1322px;top:237px;" width="7" height="4" viewBox="0 0 7 4"><path d="M0 0H7L3.5 4Z" fill="#444"/></svg>
<div class="t" style="left:1287.4px;top:252.74px;font-size:11.6px;line-height:1;color:#5a5a5a;font-weight:normal;font-family:'Liberation Sans';">Düzenleme</div>
<div class="a" style="left:47px;top:270px;width:1434px;height:599px;background:linear-gradient(180deg,#cdd1d9 0,#c9ccd3 45%,#c2c3c8 100%)"></div>
<div class="a" style="left:47px;top:270px;width:5px;height:599px;background:#fafafc;border-right:1px solid #b0b3ba"></div>
<div class="a" style="left:1481px;top:270px;width:17px;height:599px;background:#e4e6ec;border-left:1px solid #d0d3da"></div>
<svg class="a" style="left:1484px;top:277px;" width="10" height="8" viewBox="0 0 10 8"><path d="M1 7L5 2L9 7Z" fill="#444"/></svg>
<div class="a" style="left:1483px;top:303px;width:13px;height:16px;border:1px solid #9aa0aa;border-radius:2px;background:#f6f7f9"></div>
<div class="a" style="left:1486px;top:307.0px;width:7px;height:1px;background:#666"></div>
<div class="a" style="left:1486px;top:309.5px;width:7px;height:1px;background:#666"></div>
<div class="a" style="left:1486px;top:312.0px;width:7px;height:1px;background:#666"></div>
<svg class="a" style="left:1484px;top:802px;" width="10" height="8" viewBox="0 0 10 8"><path d="M1 2L5 7L9 2Z" fill="#777"/></svg>
<div class="a" style="left:1481px;top:816px;width:17px;height:1px;background:#fff"></div>
<svg class="a" style="left:1484px;top:822px;" width="10" height="26" viewBox="0 0 10 26"><path d="M1 6L5 1L9 6Z" fill="#111"/><path d="M1 10L5 5L9 10Z" fill="#111"/><path d="M1 16L5 21L9 16Z" fill="#111"/><path d="M1 20L5 25L9 20Z" fill="#111"/></svg>
<div class="a" style="left:385px;top:279px;width:765px;height:574px;background:#fff;box-shadow:4px 4px 7px rgba(50,50,60,.55),-2px 0 4px rgba(50,50,60,.3),0 -1px 2px rgba(50,50,60,.2)"></div>
<svg class="a" style="left:385px;top:760px;" width="120" height="93" viewBox="0 0 120 93"><defs><linearGradient id="tg" x1="0" y1="0" x2="1" y2="0.35"><stop offset="0" stop-color="#087a9c"/><stop offset="0.55" stop-color="#1a92bc"/><stop offset="1" stop-color="#4bb0d8"/></linearGradient></defs><path d="M0 4C30 14 60 22 100 32L120 37V93H0Z" fill="url(#tg)"/><path d="M53 19C70 24 85 28 100 32" stroke="#111" stroke-width="1.8" fill="none"/></svg>
<div class="t" style="left:362.5px;width:800px;text-align:center;top:398.36px;font-size:29.7px;line-height:1;color:#e60000;font-weight:bold;font-family:'Liberation Sans';-webkit-text-stroke:0.6px #fff;letter-spacing:0px">FROM SCREEN TO SKILLS: INVESTIGATING</div>
<div class="t" style="left:364px;width:800px;text-align:center;top:434.75px;font-size:29.7px;line-height:1;color:#e60000;font-weight:bold;font-family:'Liberation Sans';-webkit-text-stroke:0.6px #fff;letter-spacing:0px">CARTOONS&#39; INFLUENCE ON PRESCHOOLERS’</div>
<div class="t" style="left:363px;width:800px;text-align:center;top:470.75px;font-size:29.7px;line-height:1;color:#e60000;font-weight:bold;font-family:'Liberation Sans';-webkit-text-stroke:0.6px #fff;letter-spacing:0px">DEVELOPMENT</div>
<div class="t" style="left:369.5px;width:800px;text-align:center;top:579.58px;font-size:25.2px;line-height:1;color:#111;font-weight:bold;font-family:'Liberation Sans';">Prof. Dr. Abdülkadir KABADAYI</div>
<div class="t" style="left:369.5px;width:800px;text-align:center;top:661.26px;font-size:20.4px;line-height:1;color:#e80008;font-weight:bold;font-family:'Liberation Sans';">Necmettin Erbakan University</div>
<div class="t" style="left:370px;width:800px;text-align:center;top:683.66px;font-size:20.4px;line-height:1;color:#e80008;font-weight:bold;font-family:'Liberation Sans';">A.K. Faculty of Education, TURKEY</div>
<div class="t" style="left:370.5px;width:800px;text-align:center;top:707.66px;font-size:20.4px;line-height:1;color:#e80008;font-weight:bold;font-family:'Liberation Sans';">akkabadayi@erbakan.edu.tr</div>
<svg class="a" style="left:687px;top:603px;" width="134" height="4" viewBox="0 0 134 4"><path d="M0 2L1 0L3 3L5 0L7 3L9 0L11 3L13 0L15 3L17 0L19 3L21 0L23 3L25 0L27 3L29 0L31 3L33 0L35 3L37 0L39 3L41 0L43 3L45 0L47 3L49 0L51 3L53 0L55 3L57 0L59 3L61 0L63 3L65 0L67 3L69 0L71 3L73 0L75 3L77 0L79 3L81 0L83 3L85 0L87 3L89 0L91 3L93 0L95 3L97 0L99 3L101 0L103 3L105 0L107 3L109 0L111 3L113 0L115 3L117 0L119 3L121 0L123 3L125 0L127 3L129 0L131 3L133 0" stroke="#e03030" stroke-width="0.8" fill="none"/></svg>
<svg class="a" style="left:626px;top:680px;" width="96" height="4" viewBox="0 0 96 4"><path d="M0 2L1 0L3 3L5 0L7 3L9 0L11 3L13 0L15 3L17 0L19 3L21 0L23 3L25 0L27 3L29 0L31 3L33 0L35 3L37 0L39 3L41 0L43 3L45 0L47 3L49 0L51 3L53 0L55 3L57 0L59 3L61 0L63 3L65 0L67 3L69 0L71 3L73 0L75 3L77 0L79 3L81 0L83 3L85 0L87 3L89 0L91 3L93 0L95 3" stroke="#e03030" stroke-width="0.8" fill="none"/></svg>
<svg class="a" style="left:729px;top:680px;" width="84" height="4" viewBox="0 0 84 4"><path d="M0 2L1 0L3 3L5 0L7 3L9 0L11 3L13 0L15 3L17 0L19 3L21 0L23 3L25 0L27 3L29 0L31 3L33 0L35 3L37 0L39 3L41 0L43 3L45 0L47 3L49 0L51 3L53 0L55 3L57 0L59 3L61 0L63 3L65 0L67 3L69 0L71 3L73 0L75 3L77 0L79 3L81 0L83 3" stroke="#e03030" stroke-width="0.8" fill="none"/></svg>
<svg class="a" style="left:962px;top:476px;" width="14" height="22" viewBox="0 0 14 22"><path d="M1 1V17L5 13L8 20L11 19L8 12H13Z" fill="#fff" stroke="#222" stroke-width="1"/></svg>
<div class="a" style="left:47px;top:869px;width:1451px;height:1px;background:#8e9096"></div>
<div class="a" style="left:47px;top:870px;width:1451px;height:4px;background:#f5f5f9"></div>
<div class="a" style="left:47px;top:874px;width:1451px;height:2px;background:#909299"></div>
<div class="a" style="left:47px;top:876px;width:1451px;height:23px;background:linear-gradient(180deg,#eceef2,#dfe2e7)"></div>
<div class="t" style="left:57px;top:881.23px;font-size:11.5px;line-height:1;color:#555;font-weight:normal;font-family:'Liberation Sans';">Slayt 1 / 29</div>
<div class="a" style="left:126px;top:879px;width:1px;height:18px;background:#c5c8ce"></div>
<div class="t" style="left:134px;top:881.23px;font-size:11.5px;line-height:1;color:#555;font-weight:normal;font-family:'Liberation Sans';">"Kalabalık"</div>
<div class="a" style="left:201px;top:879px;width:1px;height:18px;background:#c5c8ce"></div>
<div class="t" style="left:212px;top:881.23px;font-size:11.5px;line-height:1;color:#555;font-weight:normal;font-family:'Liberation Sans';">Türkçe</div>
<div class="a" style="left:258px;top:879px;width:1px;height:18px;background:#c5c8ce"></div>
<div class="a" style="left:1203px;top:879px;width:1px;height:18px;background:#c5c8ce"></div>
<div class="a" style="left:1208px;top:878px;width:18px;height:18px;background:linear-gradient(180deg,#fde9a8,#f8d36a);border:1px solid #e0b040;border-radius:2px"></div>
<div class="a" style="left:1212px;top:882px;width:10px;height:10px;border:1.5px solid #444;background:#fff"></div>
<div class="a" style="left:1216px;top:883px;width:1px;height:8px;background:#444"></div>
<svg class="a" style="left:1230px;top:880px;" width="14" height="14" viewBox="0 0 14 14"><rect x="1" y="1" width="5" height="5" fill="none" stroke="#555"/><rect x="8" y="1" width="5" height="5" fill="none" stroke="#555"/><rect x="1" y="8" width="5" height="5" fill="none" stroke="#555"/><rect x="8" y="8" width="5" height="5" fill="none" stroke="#555"/></svg>
<svg class="a" style="left:1250px;top:880px;" width="14" height="14" viewBox="0 0 14 14"><path d="M1 2Q4 1 7 3Q10 1 13 2V12Q10 11 7 13Q4 11 1 12Z M7 3V13" fill="none" stroke="#555"/></svg>
<svg class="a" style="left:1269px;top:880px;" width="14" height="14" viewBox="0 0 14 14"><rect x="1" y="1" width="12" height="7" fill="none" stroke="#555"/><path d="M7 8V12M4 13H10" stroke="#555"/></svg>
<div class="t" style="left:1297px;top:881.23px;font-size:11.5px;line-height:1;color:#555;font-weight:normal;font-family:'Liberation Sans';">%75</div>
<div class="a" style="left:1327px;top:878px;width:17px;height:17px;border-radius:50%;border:1px solid #888;background:linear-gradient(180deg,#fff,#ddd)"></div>
<div class="a" style="left:1331px;top:886px;width:9px;height:1.5px;background:#444"></div>
<div class="a" style="left:1344px;top:886px;width:40px;height:1px;background:#aaa"></div>
<div class="a" style="left:47px;top:899px;width:1451px;height:41px;background:linear-gradient(90deg,#dfe3d2 0,#e6e8d8 30%,#efece0 50%,#f2eadf 62%,#e6ede2 72%,#d6eeea 80%,#d2ece8 100%)"></div>
<div class="a" style="left:47px;top:899px;width:52px;height:41px;background:#d3e0c6"></div>
<svg class="a" style="left:64px;top:911px;" width="17" height="17" viewBox="0 0 17 17"><path d="M0 2.5L7 1.5V8H0Z M8 1.4L17 0V8H8Z M0 9H7V15.5L0 14.5Z M8 9H17V17L8 15.6Z" fill="#111"/></svg>
<div class="a" style="left:99px;top:899px;width:364px;height:41px;background:#fff"></div>
<svg class="a" style="left:111px;top:912px;" width="18" height="17" viewBox="0 0 18 17"><circle cx="11" cy="6.5" r="5.5" fill="none" stroke="#222" stroke-width="1.4"/><path d="M7 10.5L1 16.5" stroke="#222" stroke-width="1.6"/></svg>
<div class="t" style="left:141px;top:911.83px;font-size:15.5px;line-height:1;color:#3a3a3a;font-weight:normal;font-family:'Liberation Sans';">Aramak için buraya yazın</div>
<svg class="a" style="left:382px;top:899px;" width="81" height="41" viewBox="0 0 81 41"><defs><linearGradient id="fh" x1="0" y1="0" x2="1" y2="0"><stop offset="0" stop-color="#a0604e"/><stop offset="0.6" stop-color="#c08878"/><stop offset="1" stop-color="#e0b8a8"/></linearGradient></defs><path d="M1 40C8 34 18 31 30 31L58 32C68 32 76 30 81 27V41H1Z" fill="url(#fh)"/><path d="M10 12C12 5 22 3 30 6C40 7 55 9 64 15C72 20 74 28 71 33H42C30 30 20 24 12 20C9 18 9 15 10 12Z" fill="#6ccfa6"/><path d="M52 17C58 16 66 22 66 30L56 32C52 28 50 22 52 17Z" fill="#5cc098"/><path d="M14 18C20 23 30 27 43 28V15C32 16 22 17 14 18Z" fill="#f0902a"/><circle cx="25.5" cy="9" r="2.8" fill="#f4f4f4"/><circle cx="25.5" cy="9" r="1.8" fill="#1a1a1a"/><path d="M31 29H46L48 38H32Z" fill="#f3a328"/><path d="M20 31H34V35H22Z" fill="#f0a030"/></svg>
<svg class="a" style="left:480px;top:910px;" width="18" height="19" viewBox="0 0 18 19"><path d="M0.5 1H11M0.5 18H11M1 4.5H10.5V14.5H1Z" stroke="#333" stroke-width="1.2" fill="none"/><path d="M15 0.5V18.5" stroke="#333" stroke-width="1.2"/><rect x="13.5" y="6" width="3" height="3" fill="#333"/></svg>
<svg class="a" style="left:530px;top:907px;" width="26" height="24" viewBox="0 0 26 24"><defs><linearGradient id="eg" x1="0" y1="0" x2="1" y2="1"><stop offset="0" stop-color="#3bd37a"/><stop offset="0.5" stop-color="#1a9ad6"/><stop offset="1" stop-color="#0b4fa8"/></linearGradient></defs><circle cx="13" cy="12" r="12" fill="url(#eg)"/><circle cx="15" cy="13" r="5" fill="#e5e8d8"/></svg>
<svg class="a" style="left:583px;top:906px;" width="25" height="25" viewBox="0 0 25 25"><circle cx="12.5" cy="12.5" r="12" fill="#e8b420"/><path d="M12.5 0.5A12 12 0 0 1 23 7H12.5Z" fill="#d93a2e"/><path d="M1.5 8A12 12 0 0 0 8 23L12.5 13Z" fill="#2a9a48"/><circle cx="12.5" cy="12.5" r="5.5" fill="#fff"/><circle cx="12.5" cy="12.5" r="4.2" fill="#2a6ad8"/></svg>
<div class="a" style="left:634px;top:906px;width:24px;height:22px;background:linear-gradient(180deg,#f4f6fa,#cdd6e6);border:1px solid #7a8aaa"></div>
<div class="t" style="left:637px;top:911.25px;font-size:15px;line-height:1;color:#2a5aa8;font-weight:bold;font-family:'Liberation Sans';">W</div>
<div class="a" style="left:687px;top:906px;width:25px;height:25px;border-radius:50%;background:#2a62e6"></div>
<div class="t" style="left:690px;top:913.65px;font-size:11px;line-height:1;color:#fff;font-weight:bold;font-family:'Liberation Sans';">zm</div>
<div class="a" style="left:726px;top:899px;width:51px;height:41px;background:rgba(255,255,255,.45)"></div>
<div class="a" style="left:738px;top:906px;width:24px;height:22px;background:linear-gradient(180deg,#fbe8e0,#f2c4b4);border:1px solid #c86040"></div>
<div class="t" style="left:742px;top:911.25px;font-size:15px;line-height:1;color:#c84a26;font-weight:bold;font-family:'Liberation Sans';">P</div>
<div class="a" style="left:574px;top:937px;width:42px;height:3px;background:#1b6fd0"></div>
<div class="a" style="left:626px;top:937px;width:42px;height:3px;background:#1b6fd0"></div>
<div class="a" style="left:678px;top:937px;width:42px;height:3px;background:#1b6fd0"></div>
<div class="a" style="left:726px;top:937px;width:51px;height:3px;background:#1b6fd0"></div>
<svg class="a" style="left:1093px;top:912px;" width="13" height="8" viewBox="0 0 13 8"><path d="M1 7L6.5 1.5L12 7" stroke="#222" stroke-width="1.4" fill="none"/></svg>
<svg class="a" style="left:1127px;top:909px;" width="12" height="20" viewBox="0 0 12 20"><rect x="3" y="0" width="6" height="12" rx="3" fill="#111"/><path d="M1 9C1 13 11 13 11 9M6 13V18M3 19H9" stroke="#111" stroke-width="1.3" fill="none"/></svg>
<svg class="a" style="left:1158px;top:912px;" width="20" height="14" viewBox="0 0 20 14"><rect x="4" y="3" width="15" height="8" fill="none" stroke="#222" stroke-width="1.3"/><rect x="10" y="5" width="7" height="4" fill="#222"/><path d="M0 7H4M1 4V1M3 4V1" stroke="#222" stroke-width="1.3"/></svg>
<svg class="a" style="left:1192px;top:909px;" width="19" height="20" viewBox="0 0 19 20"><path d="M9.5 0L19 5V15L9.5 20L0 15V5Z" fill="#1fb055"/><text x="5.5" y="14.5" font-size="11" font-weight="bold" fill="#123" font-family="Liberation Sans">k</text></svg>
<svg class="a" style="left:1230px;top:910px;" width="16" height="16" viewBox="0 0 16 16"><path d="M2 14A12 12 0 0 1 14 2M5 14A9 9 0 0 1 14 5M8 14A6 6 0 0 1 14 8" stroke="#666" stroke-width="1.3" fill="none"/><circle cx="13" cy="13" r="1.5" fill="#222"/></svg>
<svg class="a" style="left:1260px;top:909px;" width="18" height="18" viewBox="0 0 18 18"><path d="M1 6H4L9 2V16L4 12H1Z" fill="none" stroke="#222" stroke-width="1.3"/><path d="M12 6C13 8 13 10 12 12M14.5 4C16.5 7 16.5 11 14.5 14" stroke="#222" stroke-width="1.3" fill="none"/></svg>
<svg class="a" style="left:1298px;top:911px;" width="18" height="15" viewBox="0 0 18 15"><rect x="1" y="1" width="16" height="13" fill="none" stroke="#222" stroke-width="1.4"/><path d="M1 9H17M9 9V14" stroke="#222" stroke-width="1.4"/></svg>
<div class="t" style="left:1349px;top:903.38px;font-size:12.5px;line-height:1;color:#222;font-weight:normal;font-family:'Liberation Sans';">15:55</div>
<div class="t" style="left:1336px;top:922.38px;font-size:12.5px;line-height:1;color:#222;font-weight:normal;font-family:'Liberation Sans';">15.05.2024</div>
<svg class="a" style="left:1530px;top:428px;overflow:hidden" width="371" height="209" viewBox="0 0 371 209">
<defs>
<linearGradient id="vbg" x1="0" y1="0" x2="1" y2="0"><stop offset="0" stop-color="#c8d3cf"/><stop offset="0.45" stop-color="#d6dee0"/><stop offset="1" stop-color="#dce6e9"/></linearGradient>
<radialGradient id="skin" cx="0.5" cy="0.42" r="0.62"><stop offset="0" stop-color="#cfa092"/><stop offset="0.55" stop-color="#c29484"/><stop offset="0.85" stop-color="#a47e72"/><stop offset="1" stop-color="#86685e"/></radialGradient>
<linearGradient id="beard" x1="0" y1="0" x2="0" y2="1"><stop offset="0" stop-color="#9a8a84" stop-opacity="0"/><stop offset="0.3" stop-color="#9a8a84" stop-opacity="0.55"/><stop offset="1" stop-color="#8a7870" stop-opacity="0.6"/></linearGradient>
<filter id="bl" x="-30%" y="-30%" width="160%" height="160%"><feGaussianBlur stdDeviation="2.5"/></filter>
<filter id="bl2" x="-30%" y="-30%" width="160%" height="160%"><feGaussianBlur stdDeviation="1.3"/></filter>
<filter id="bl3" x="-30%" y="-30%" width="160%" height="160%"><feGaussianBlur stdDeviation="0.8"/></filter>
<clipPath id="vc"><rect width="371" height="209"/></clipPath>
</defs>
<g clip-path="url(#vc)">
<rect width="371" height="209" fill="url(#vbg)"/>
<path d="M124 -5H266C268 20 266 50 262 70L250 95H135C128 70 124 40 124 -5Z" fill="#747474" filter="url(#bl)"/>
<path d="M20 215C28 195 35 175 48 160C60 146 78 136 100 128C115 124 130 121 142 120L200 215Z" fill="#1c1917" filter="url(#bl3)"/>
<path d="M255 120C285 124 320 128 345 135C360 145 371 160 375 175V215H200Z" fill="#1c1917" filter="url(#bl3)"/>
<path d="M137 118C142 150 152 180 166 215H238C246 180 255 150 262 116Z" fill="#a9857a" filter="url(#bl2)"/><path d="M150 150C165 175 235 175 252 145" stroke="#7a6058" stroke-width="6" fill="none" opacity="0.5" filter="url(#bl)"/>
<path d="M140 -2H250C256 30 260 80 261 122C258 160 230 176 198 176C165 176 142 160 138 124C137 80 136 30 140 -2Z" fill="url(#skin)" filter="url(#bl2)"/>
<path d="M139 100C140 140 160 176 198 176C236 176 260 150 261 100C250 120 230 118 200 118C170 118 150 120 139 100Z" fill="url(#beard)" filter="url(#bl2)"/>
<path d="M146 36C150 28 165 27 180 33C182 36 176 38 170 37C160 35 150 38 146 36Z" fill="#3a2a26" filter="url(#bl3)"/>
<path d="M204 36C212 31 230 30 238 36C236 39 228 37 220 38C212 38 206 39 204 36Z" fill="#3a2a26" filter="url(#bl3)"/>
<path d="M155 54C160 50 172 50 177 54C172 56 160 56 155 54Z" fill="#3e2e2a" filter="url(#bl3)"/>
<path d="M208 52C214 49 226 49 232 52C226 54 214 54 208 52Z" fill="#3e2e2a" filter="url(#bl3)"/>
<path d="M186 56C184 66 180 76 182 82C188 86 204 86 210 82C212 76 206 66 204 56Z" fill="#c9a090" filter="url(#bl2)"/>
<path d="M184 80C190 84 202 84 210 80" stroke="#6a4a44" stroke-width="2" fill="none" filter="url(#bl3)"/><ellipse cx="165" cy="75" rx="14" ry="10" fill="#d48e84" opacity="0.35" filter="url(#bl)"/><ellipse cx="232" cy="75" rx="14" ry="10" fill="#d48e84" opacity="0.35" filter="url(#bl)"/>
<path d="M160 106C165 96 180 88 197 90C214 88 230 95 236 106C228 110 210 106 197 106C185 106 168 110 160 106Z" fill="#86807c" filter="url(#bl2)"/>
<path d="M176 109C185 111 208 111 218 108" stroke="#5a3a36" stroke-width="3" fill="none" filter="url(#bl3)"/>
<path d="M142 100C138 125 150 160 170 170" stroke="#8a6e66" stroke-width="5" fill="none" opacity="0.5" filter="url(#bl)"/>
</g></svg>
<div class="a" style="left:1530px;top:609px;width:211px;height:28px;background:rgba(38,38,38,.75)"></div>
<div class="a" style="left:1536.0px;top:626px;width:3.3px;height:6px;background:#f0f0f0"></div>
<div class="a" style="left:1541.3px;top:622px;width:3.3px;height:10px;background:#f0f0f0"></div>
<div class="a" style="left:1546.6px;top:618px;width:3.3px;height:14px;background:#f0f0f0"></div>
<div class="a" style="left:1551.9px;top:614px;width:3.3px;height:18px;background:#f0f0f0"></div>
<div class="t" style="left:1563px;top:614.02px;font-size:18.8px;line-height:1;color:#fafafa;font-weight:normal;font-family:'Liberation Sans';">Abdülkadir kabadayı</div>
<div class="a" style="left:1518px;top:513px;width:1.5px;height:38px;background:#bdbdbd"></div>
<div class="a" style="left:1523px;top:513px;width:1.5px;height:38px;background:#bdbdbd"></div>
<svg class="a" style="left:84px;top:948px;" width="36" height="36" viewBox="0 0 36 36"><rect x="11" y="1" width="12" height="23" rx="6" fill="#a8a8a8"/><path d="M6.5 17C6.5 26 27.5 26 27.5 17" stroke="#a8a8a8" stroke-width="2" fill="none"/><path d="M17 25V33M11 33.5H23" stroke="#a8a8a8" stroke-width="2"/><path d="M0.5 34.5L34 1.5" stroke="#1a1a1a" stroke-width="4"/><path d="M0.5 34.5L34 1.5" stroke="#ea5a5e" stroke-width="2"/></svg>
<div class="t" style="left:-298.5px;width:800px;text-align:center;top:992.83px;font-size:18.2px;line-height:1;color:#dadada;font-weight:normal;font-family:'Liberation Sans';">Включить звук</div>
<svg class="a" style="left:152.5px;top:962px;" width="11" height="7" viewBox="0 0 11 7"><path d="M1 6L5.5 1.5L10 6" stroke="#c8c8c8" stroke-width="1.8" fill="none"/></svg>
<svg class="a" style="left:333px;top:962px;" width="11" height="7" viewBox="0 0 11 7"><path d="M1 6L5.5 1.5L10 6" stroke="#c8c8c8" stroke-width="1.8" fill="none"/></svg>
<svg class="a" style="left:586px;top:962px;" width="11" height="7" viewBox="0 0 11 7"><path d="M1 6L5.5 1.5L10 6" stroke="#c8c8c8" stroke-width="1.8" fill="none"/></svg>
<svg class="a" style="left:721px;top:962px;" width="11" height="7" viewBox="0 0 11 7"><path d="M1 6L5.5 1.5L10 6" stroke="#c8c8c8" stroke-width="1.8" fill="none"/></svg>
<svg class="a" style="left:1052px;top:962px;" width="11" height="7" viewBox="0 0 11 7"><path d="M1 6L5.5 1.5L10 6" stroke="#c8c8c8" stroke-width="1.8" fill="none"/></svg>
<svg class="a" style="left:247px;top:948px;" width="38" height="36" viewBox="0 0 38 36"><rect x="1" y="7" width="27" height="22" rx="4" fill="#a8a8a8"/><path d="M28 14L37 9V27L28 22Z" fill="#a8a8a8" stroke="#a8a8a8" stroke-width="1" stroke-linejoin="round"/><path d="M1.5 34.5L35.5 1.5" stroke="#1a1a1a" stroke-width="4"/><path d="M1.5 34.5L35.5 1.5" stroke="#ea5a5e" stroke-width="2"/></svg>
<div class="t" style="left:-134px;width:800px;text-align:center;top:992.83px;font-size:18.2px;line-height:1;color:#dadada;font-weight:normal;font-family:'Liberation Sans';">Начать видео</div>
<svg class="a" style="left:492px;top:952px;" width="38" height="30" viewBox="0 0 38 30"><circle cx="13" cy="7.5" r="6.3" fill="#a8a8a8"/><path d="M1 28C1 20 6 17.5 13 17.5C20 17.5 24 20 24 28Z" fill="#a8a8a8" stroke="#1a1a1a" stroke-width="0"/><circle cx="27" cy="10" r="5.3" fill="#a8a8a8"/><path d="M24.5 28V26C24.5 22 23 20 22 19C23.5 18.5 25 18.5 27 18.5C33 18.5 37 20.5 37 28Z" fill="#a8a8a8"/><path d="M24.5 28C24.5 22 22 19 19 18" stroke="#1a1a1a" stroke-width="1.8" fill="none"/></svg>
<div class="t" style="left:536px;top:955.07px;font-size:18.5px;line-height:1;color:#dadada;font-weight:normal;font-family:'Liberation Sans';">68</div>
<div class="t" style="left:111px;width:800px;text-align:center;top:992.83px;font-size:18.2px;line-height:1;color:#dadada;font-weight:normal;font-family:'Liberation Sans';">Участники</div>
<svg class="a" style="left:660px;top:951px;" width="33" height="31" viewBox="0 0 33 31"><path d="M5 1H27C30 1 32 3 32 6V17C32 20 30 22 27 22H15L8 29V22H5C2 22 1 20 1 17V6C1 3 2 1 5 1Z" fill="#a8a8a8"/></svg>
<div class="a" style="left:680px;top:941px;width:27px;height:25px;border-radius:8px;background:#e8363c;border:2px solid #1a1a1a"></div>
<div class="t" style="left:293.5px;width:800px;text-align:center;top:948.17px;font-size:14.5px;line-height:1;color:#fff;font-weight:bold;font-family:'Liberation Sans';">4</div>
<div class="t" style="left:276.5px;width:800px;text-align:center;top:992.83px;font-size:18.2px;line-height:1;color:#dadada;font-weight:normal;font-family:'Liberation Sans';">Чат</div>
<div class="a" style="left:832px;top:952px;width:36px;height:28px;border-radius:4px;background:#28d35c"></div>
<svg class="a" style="left:842px;top:956px;" width="16" height="20" viewBox="0 0 16 20"><path d="M8 18V3M2 9L8 3L14 9" stroke="#111" stroke-width="2.6" fill="none"/></svg>
<div class="t" style="left:449.5px;width:800px;text-align:center;top:992.83px;font-size:18.2px;line-height:1;color:#2bd45f;font-weight:normal;font-family:'Liberation Sans';">Демонстрация экрана</div>
<svg class="a" style="left:1001px;top:950px;" width="35" height="31" viewBox="0 0 35 31"><circle cx="15" cy="16" r="13.5" fill="#a8a8a8"/><circle cx="26" cy="6" r="7.5" fill="#1a1a1a"/><path d="M26 0V11M20.5 5.5H31.5" stroke="#c8c8c8" stroke-width="1.8"/><circle cx="10.5" cy="13" r="2" fill="#1a1a1a"/><circle cx="18.5" cy="13" r="2" fill="#1a1a1a"/><path d="M8.5 18C11 22 18 22 20.5 18" stroke="#1a1a1a" stroke-width="2" fill="none"/></svg>
<div class="t" style="left:615.5px;width:800px;text-align:center;top:992.83px;font-size:18.2px;line-height:1;color:#dadada;font-weight:normal;font-family:'Liberation Sans';">Реакции</div>
<svg class="a" style="left:1131px;top:954px;" width="27" height="27" viewBox="0 0 27 27"><path d="M1.5 12V6C1.5 3.5 3 2 5.5 2H12M15 25H20C23 25 24.5 23.5 24.5 21V13" stroke="#b5b5b5" stroke-width="2" fill="none"/><circle cx="21" cy="5" r="3.3" fill="none" stroke="#b5b5b5" stroke-width="1.8"/><circle cx="5" cy="21.5" r="3.3" fill="none" stroke="#b5b5b5" stroke-width="1.8"/></svg>
<div class="t" style="left:744px;width:800px;text-align:center;top:992.83px;font-size:18.2px;line-height:1;color:#dadada;font-weight:normal;font-family:'Liberation Sans';">Приложения</div>
<svg class="a" style="left:1286px;top:951px;" width="32" height="28" viewBox="0 0 32 28"><path d="M10 23H5C3 23 1.5 21.5 1.5 19.5V5C1.5 3 3 1.5 5 1.5H27C29 1.5 30.5 3 30.5 5V18" stroke="#b5b5b5" stroke-width="2" fill="none"/><path d="M13 22C13 20 15 19 17 19H28C29.5 19 30.5 20 30.5 21.5C30.5 23 29.5 24 28 24H17C15 24 13 23.5 13 22Z" fill="#b5b5b5"/></svg>
<div class="t" style="left:1224px;top:992.83px;font-size:18.2px;line-height:1;color:#dadada;font-weight:normal;font-family:'Liberation Sans';">Доски сообщений</div>
<div class="a" style="left:51px;top:862px;width:60px;height:60px;border-radius:50%;background:rgba(38,44,46,.88);border:1.5px solid rgba(10,10,10,.9)"></div>
<svg class="a" style="left:68px;top:877px;" width="28" height="28" viewBox="0 0 28 28"><path d="M3 25L4.5 19.5L19.5 4.5C21 3 23 3 24.5 4.5C26 6 26 8 24.5 9.5L9.5 24.5Z" fill="none" stroke="#2fd464" stroke-width="2.2" stroke-linejoin="round"/><path d="M17 7L22 12" stroke="#2fd464" stroke-width="2"/></svg>
<div class="a" style="left:485px;top:792px;width:383px;height:126px;background:#232323;box-shadow:0 2px 6px rgba(0,0,0,.35)"></div>
<svg class="a" style="left:665px;top:917px;" width="22" height="12" viewBox="0 0 22 12"><path d="M0 0H22L11 12Z" fill="#232323"/></svg>
<div class="a" style="left:509px;top:815px;width:43px;height:43px;border-radius:8px;background:#2b7bc0"></div>
<div class="t" style="left:130.5px;width:800px;text-align:center;top:829.85px;font-size:19px;line-height:1;color:#fff;font-weight:bold;font-family:'Liberation Sans';">В</div>
<div class="t" style="left:576px;top:821.30px;font-size:20px;line-height:1;color:#f5f5f5;font-weight:bold;font-family:'Liberation Sans';">От Величко Марія всем</div>
<div class="t" style="left:573px;top:866.70px;font-size:20px;line-height:1;color:#f0f0f0;font-weight:normal;font-family:'Liberation Sans';">Дякуємо!</div>
<svg class="a" style="left:843px;top:803px;" width="13" height="13" viewBox="0 0 13 13"><path d="M1 1L12 12M12 1L1 12" stroke="#cfcfcf" stroke-width="1.4"/></svg>
<div class="a" style="left:1380px;top:869px;width:540px;height:151px;background:linear-gradient(100deg,#1f2223 0,#222425 50%,#272324 80%,#2d2526 100%);border-top:1px solid #3a3a3a"></div>
<div class="t" style="left:1399.5px;top:895.93px;font-size:22.2px;line-height:1;color:#f8f8f8;font-weight:normal;font-family:'Liberation Sans';">Динамики (Realtek(R) Audio)</div>
<svg class="a" style="left:1414px;top:963px;" width="38" height="34" viewBox="0 0 38 34"><path d="M2 11H9L18 3V31L9 23H2Z" fill="none" stroke="#e0e0e0" stroke-width="2.2" stroke-linejoin="round"/><path d="M23 12C25 15 25 19 23 22" stroke="#e0e0e0" stroke-width="2.2" fill="none"/><path d="M28 8C32 13 32 21 28 26" stroke="#e0e0e0" stroke-width="2.2" fill="none"/><path d="M33 3C38 10 38 24 33 31" stroke="#8a8a8a" stroke-width="2" fill="none"/></svg>
<div class="a" style="left:1478px;top:976.5px;width:130px;height:3px;border-radius:2px;background:#78b4ee"></div>
<div class="a" style="left:1612px;top:976.5px;width:214px;height:3px;border-radius:2px;background:#7b7b7b"></div>
<div class="a" style="left:1605px;top:961px;width:13px;height:36px;border-radius:7px;background:#78b4ee"></div>
<div class="t" style="left:1852px;top:960.95px;font-size:33px;line-height:1;color:#fafafa;font-weight:normal;font-family:'Liberation Sans';">38</div>
<div class="a" style="left:0px;top:1020px;width:1920px;height:60px;background:linear-gradient(90deg,#3e3e3e 0,#3b3b3b 40%,#393838 58%,#322e2f 70%,#2c2729 85%,#2a2527 100%)"></div>
<svg class="a" style="left:24px;top:1040px;" width="24" height="24" viewBox="0 0 24 24"><path d="M0 3.3L10 2V11.5H0Z M11 1.8L24 0V11.5H11Z M0 12.5H10V22L0 20.7Z M11 12.5H24V24L11 22.2Z" fill="#fff"/></svg>
<div class="a" style="left:72px;top:1020px;width:431px;height:60px;background:#f0f0f0;border:1px solid #d8d8d8"></div>
<svg class="a" style="left:90px;top:1038px;" width="24" height="28" viewBox="0 0 24 28"><circle cx="14.5" cy="9.5" r="7.5" fill="none" stroke="#111" stroke-width="2"/><path d="M9 15.5L1 24" stroke="#111" stroke-width="2.2"/></svg>
<div class="t" style="left:133px;top:1043.22px;font-size:21.5px;line-height:1;color:#1a1a1a;font-weight:normal;font-family:'Liberation Sans';">Пошук</div>
<svg class="a" style="left:393px;top:1025px;" width="104" height="52" viewBox="0 0 104 52"><defs><linearGradient id="bg1" x1="0" y1="0" x2="0" y2="1"><stop offset="0" stop-color="#6ab8f5"/><stop offset="1" stop-color="#2a7ad8"/></linearGradient></defs><ellipse cx="52" cy="44" rx="50" ry="8" fill="#b8d8f4"/><path d="M8 18L30 10V46H8Z" fill="url(#bg1)"/><path d="M30 10L50 6V46H30Z" fill="#3b8ae0"/><path d="M30 8L60 2L70 6L40 12Z" fill="#8ac8ff"/><path d="M40 12L70 6V46H40Z" fill="url(#bg1)"/><path d="M55 25L85 18L98 24V46H55Z" fill="#4a9aea"/><path d="M55 25L85 18L98 22L68 29Z" fill="#9ad0ff"/><rect x="14" y="28" width="8" height="18" rx="3" fill="#1a5ab0"/><rect x="47" y="34" width="8" height="12" rx="3" fill="#1a5ab0"/><rect x="72" y="38" width="8" height="10" rx="3" fill="#1a5ab0"/><rect x="45" y="18" width="4" height="6" fill="#1a5ab0"/><rect x="55" y="16" width="4" height="6" fill="#1a5ab0"/><rect x="75" y="30" width="3" height="5" fill="#1a5ab0"/><rect x="85" y="28" width="3" height="5" fill="#1a5ab0"/></svg>
<svg class="a" style="left:527px;top:1037px;" width="26" height="26" viewBox="0 0 26 26"><path d="M1 1.5H16M1 23.5H16M2 6H15V19H2Z" stroke="#fff" stroke-width="1.5" fill="none"/><path d="M22.5 1V25" stroke="#fff" stroke-width="1.5"/><rect x="20.5" y="8" width="4" height="4" fill="#fff"/></svg>
<svg class="a" style="left:594px;top:1032px;" width="36" height="36" viewBox="0 0 36 36"><defs><linearGradient id="ed1" x1="0" y1="0" x2="1" y2="0.6"><stop offset="0" stop-color="#2fb4f0"/><stop offset="0.55" stop-color="#2ac6c8"/><stop offset="1" stop-color="#62dc50"/></linearGradient><linearGradient id="ed2" x1="0" y1="0" x2="0.6" y2="1"><stop offset="0" stop-color="#1b8ede"/><stop offset="1" stop-color="#0d4f9c"/></linearGradient></defs><circle cx="18" cy="18" r="17.8" fill="url(#ed1)"/><path d="M14 19C14 15 18 13 22 13.5C28 14 34 19 36 24V36H14Z" fill="#3c3c3c"/><path d="M1 16C3 10 10 8 15 9C10 11 8 16 9 22C10 29 17 33 24 33C29 33 33 31 34 28C34 31 30 36 18 36C8 36 0 28 1 16Z" fill="url(#ed2)"/><path d="M22 13.5C17 14 14 17 14.5 21C15 26 21 30 27 30C31 30 34 28 34.5 26C32 28 28 28 26 27C23 26 21 24 21 22C21 20 23 19 26 19C30 19 33 21 35 23C34 17 28 13.5 22 13.5Z" fill="#3c3c3c"/><path d="M9 22C10 29 17 33 24 33C29 33 33 31 34.5 26C32 29 28 30 25 30C19 30 14 26 14.5 21C14.5 17 17 14.5 20 14C13 13 9 17 9 22Z" fill="#1565b8"/></svg>
<svg class="a" style="left:660px;top:1037px;" width="32" height="27" viewBox="0 0 32 27"><path d="M0 3C0 1 1 0 3 0H13L16 3H30C31 3 32 4 32 5V10H0Z" fill="#e6a90e"/><path d="M0 5H30C31 5 32 6 32 7V24C32 25 31 26 30 26H2C1 26 0 25 0 24Z" fill="#ffd35a"/><path d="M6 26V15C6 14 7 14 7 14H25C26 14 26 15 26 15V26H21V19H11V26Z" fill="#3a90dc"/></svg>
<svg class="a" style="left:723px;top:1033px;" width="34" height="34" viewBox="0 0 34 34"><circle cx="17" cy="17" r="16.5" fill="#f4c21e"/><path d="M17 17L10 1.6A16.5 16.5 0 0 1 33.5 17Z" fill="#7e4ff4"/><path d="M17 17L10 1.6A16.5 16.5 0 0 0 9 31.5Z" fill="#f7731c"/><path d="M8 9C14 5 22 6 27 9C27 18 24 25 17 30C11 26 8 19 8 9Z" fill="#fff"/><circle cx="17" cy="15.5" r="2.3" fill="#2a3560"/><rect x="16" y="16" width="2" height="5" fill="#2a3560"/></svg>
<svg class="a" style="left:786px;top:1033px;" width="36" height="36" viewBox="0 0 36 36"><path d="M3 9H33V33C33 34.5 32 35 30.5 35H5.5C4 35 3 34.5 3 33Z" fill="#f6f6f6"/><path d="M11 9V6C11 2 25 2 25 6V9" stroke="#f6f6f6" stroke-width="2.5" fill="none"/><rect x="11" y="15" width="6.5" height="6.5" fill="#f25022"/><rect x="18.5" y="15" width="6.5" height="6.5" fill="#7fba00"/><rect x="11" y="22.5" width="6.5" height="6.5" fill="#00a4ef"/><rect x="18.5" y="22.5" width="6.5" height="6.5" fill="#ffb900"/></svg>
<svg class="a" style="left:849px;top:1034px;" width="38" height="32" viewBox="0 0 38 32"><path d="M1 12L19 1L37 12V30H1Z" fill="#0a64c8"/><path d="M1 12L19 23L37 12V30H1Z" fill="#3ab0f5"/><path d="M1 30L19 18L37 30Z" fill="#1a8ae8"/></svg>
<svg class="a" style="left:914px;top:1034px;" width="50" height="42" viewBox="0 0 50 42"><path d="M2 16L40 2L33 30L22 24L16 30L17 21L35 6L13 19Z" fill="#37a6e5"/><path d="M2 16L13 19L17 21L22 24" fill="#2a8ac8"/></svg>
<div class="a" style="left:920px;top:1049px;width:43px;height:25px;border-radius:13px;background:#333;border:1px solid #aaa"></div>
<div class="t" style="left:541.5px;width:800px;text-align:center;top:1053.20px;font-size:18px;line-height:1;color:#fff;font-weight:normal;font-family:'Liberation Sans';">99+</div>
<svg class="a" style="left:977px;top:1033px;" width="36" height="36" viewBox="0 0 36 36"><circle cx="18" cy="18" r="17.5" fill="#fbc116"/><path d="M18 0.5A17.5 17.5 0 0 1 33.2 9.3H18Z" fill="#e33b2e"/><path d="M18 0.5A17.5 17.5 0 0 0 2.8 9.3L10.5 22.5L18 9.3Z" fill="#e33b2e"/><path d="M2.8 9.3A17.5 17.5 0 0 0 16 35.4L25.5 22.5H10.5Z" fill="#1e9a48"/><circle cx="18" cy="18" r="8" fill="#fff"/><circle cx="18" cy="18" r="6.2" fill="#1a73e8"/></svg>
<svg class="a" style="left:1042px;top:1033px;" width="36" height="36" viewBox="0 0 36 36"><rect x="0.5" y="0.5" width="35" height="35" rx="14" fill="#0b5cff"/><text x="18" y="22" font-size="9.5" text-anchor="middle" fill="#fff" font-family="Liberation Sans">zoom</text></svg>
<svg class="a" style="left:1104px;top:1032px;" width="42" height="44" viewBox="0 0 42 44"><path d="M7 3C14 0 26 0 32 3C36 5 37 9 37 18C37 27 35 31 30 33C26 34.5 21 34.5 17 34L11 39V33C6 31 4 28 4 18C4 9 4 5 7 3Z" fill="#7a5cd4"/><path d="M14 10C15 9 17 9 18 11L19 14C19 15 18 16 18 17C19 19 21 21 23 22C24 22 25 21 26 21L29 22C31 23 31 25 30 26C28 29 25 29 22 27C17 24 14 21 12 16C11 13 12 11 14 10Z" fill="#fff"/></svg>
<div class="a" style="left:1120px;top:1047px;width:24px;height:24px;border-radius:8px;background:#e8302a"></div>
<div class="t" style="left:732px;width:800px;text-align:center;top:1052.40px;font-size:16px;line-height:1;color:#fff;font-weight:normal;font-family:'Liberation Sans';">25</div>
<svg class="a" style="left:1167px;top:1033px;" width="37" height="36" viewBox="0 0 37 36"><rect x="9" y="2" width="27" height="32" rx="2" fill="#2b7cd3"/><rect x="9" y="12" width="27" height="11" fill="#185abd"/><rect x="9" y="23" width="27" height="11" fill="#103f91"/><rect x="1" y="9" width="18" height="18" rx="2" fill="#185abd"/><text x="10" y="23" font-size="13" font-weight="bold" text-anchor="middle" fill="#fff" font-family="Liberation Sans">W</text></svg>
<div class="a" style="left:970px;top:1077px;width:51px;height:3px;background:#a8c8e8"></div>
<div class="a" style="left:1035px;top:1077px;width:50px;height:3px;background:#a8c8e8"></div>
<div class="a" style="left:1099px;top:1077px;width:49px;height:3px;background:#a8c8e8"></div>
<div class="a" style="left:1162px;top:1077px;width:49px;height:3px;background:#a8c8e8"></div>
<svg class="a" style="left:1256px;top:1035px;" width="38" height="30" viewBox="0 0 38 30"><path d="M8 28C3 28 1 24 2 21C3 18 6 17 8 17C9 12 14 9 19 10C23 10 27 13 28 17C32 17 36 19 36 23C36 26 33 28 30 28Z" fill="#bcd8f0"/><path d="M8 28C3 28 1 24 2 21C6 23 30 24 36 23C36 26 33 28 30 28Z" fill="#8ab8e0"/></svg>
<div class="a" style="left:1275px;top:1033px;width:18px;height:18px;border-radius:50%;background:#d8342c"></div>
<div class="t" style="left:884px;width:800px;text-align:center;top:1037.30px;font-size:12px;line-height:1;color:#fff;font-weight:normal;font-family:'Liberation Sans';">1</div>
<div class="t" style="left:1305.5px;top:1042.15px;font-size:21px;line-height:1;color:#f0f0f0;font-weight:normal;font-family:'Liberation Sans';">14°C</div>
<svg class="a" style="left:1387px;top:1043px;" width="19" height="12" viewBox="0 0 19 12"><path d="M1 11L9.5 2L18 11" stroke="#e8e8e8" stroke-width="1.6" fill="none"/></svg>
<svg class="a" style="left:1423px;top:1039px;" width="21" height="22" viewBox="0 0 21 22"><rect x="3" y="6" width="10" height="10" fill="none" stroke="#ddd" stroke-width="1.4"/><path d="M13 9L18 6V16L13 13" fill="none" stroke="#ddd" stroke-width="1.4"/><path d="M4 3C7 1 13 1 16 3M4 19C7 21 13 21 16 19" stroke="#aaa" stroke-width="1.2" fill="none"/></svg>
<svg class="a" style="left:1458px;top:1038px;" width="16" height="26" viewBox="0 0 16 26"><rect x="3.5" y="1" width="9" height="16" rx="4.5" fill="#f0f0f0"/><path d="M1 13C1 19 15 19 15 13M8 19V24M4 24.5H12" stroke="#e0e0e0" stroke-width="1.4" fill="none"/></svg>
<svg class="a" style="left:1491px;top:1038px;" width="26" height="18" viewBox="0 0 26 18"><rect x="6" y="6" width="18" height="10" rx="1" fill="none" stroke="#eee" stroke-width="1.5"/><rect x="8" y="8" width="14" height="6" fill="#eee"/><path d="M0 11H6M2 7V3M4.5 7V3" stroke="#eee" stroke-width="1.4"/></svg>
<svg class="a" style="left:1527px;top:1038px;" width="26" height="26" viewBox="0 0 26 26"><path d="M2 4L22 1V21L2 23Z" fill="none" stroke="#ddd" stroke-width="1.4"/><path d="M8 10C10 7 15 7 16 10M16 14C14 17 9 17 8 14" stroke="#ddd" stroke-width="1.3" fill="none"/><circle cx="19" cy="21" r="5" fill="#f08a1c"/></svg>
<svg class="a" style="left:1566px;top:1038px;" width="22" height="22" viewBox="0 0 22 22"><path d="M2 20A18 18 0 0 1 20 2M6 20A14 14 0 0 1 20 6M10 20A10 10 0 0 1 20 10" stroke="#aaa" stroke-width="1.5" fill="none"/><circle cx="19" cy="19" r="2" fill="#eee"/></svg>
<svg class="a" style="left:1600px;top:1039px;" width="23" height="20" viewBox="0 0 23 20"><path d="M1 7H5L11 2V18L5 13H1Z" fill="none" stroke="#e8e8e8" stroke-width="1.4"/><path d="M14 7C15 9 15 11 14 13M17 5C19 8 19 12 17 15" stroke="#e8e8e8" stroke-width="1.4" fill="none"/><path d="M20 3C23 7 23 13 20 17" stroke="#888" stroke-width="1.2" fill="none"/></svg>
<svg class="a" style="left:1642px;top:1038px;" width="22" height="24" viewBox="0 0 22 24"><path d="M3 20C6 18 14 8 17 4C19 2 21 4 19 6C15 11 9 18 7 21C5 23 1 22 3 20Z" fill="none" stroke="#ddd" stroke-width="1.5"/><path d="M2 15C5 12 10 14 8 18M14 12C17 12 20 10 20 7" stroke="#ddd" stroke-width="1.3" fill="none"/></svg>
<div class="t" style="left:1690px;top:1042.20px;font-size:18px;line-height:1;color:#f0f0f0;font-weight:normal;font-family:'Liberation Sans';">УКР</div>
<div class="t" style="left:1386px;width:800px;text-align:center;top:1026.70px;font-size:18px;line-height:1;color:#f0f0f0;font-weight:normal;font-family:'Liberation Sans';">15:55</div>
<div class="t" style="left:1386px;width:800px;text-align:center;top:1054.70px;font-size:18px;line-height:1;color:#f0f0f0;font-weight:normal;font-family:'Liberation Sans';">15.05.2024</div>
<svg class="a" style="left:1857px;top:1036px;" width="25" height="26" viewBox="0 0 25 26"><path d="M1.5 1.5H23.5V18.5H16L12.5 23L9 18.5H1.5Z" fill="none" stroke="#eee" stroke-width="1.5" stroke-linejoin="round"/></svg>
<div class="a" style="left:1911px;top:1021px;width:1.5px;height:59px;background:#888"></div>
</body></html>
